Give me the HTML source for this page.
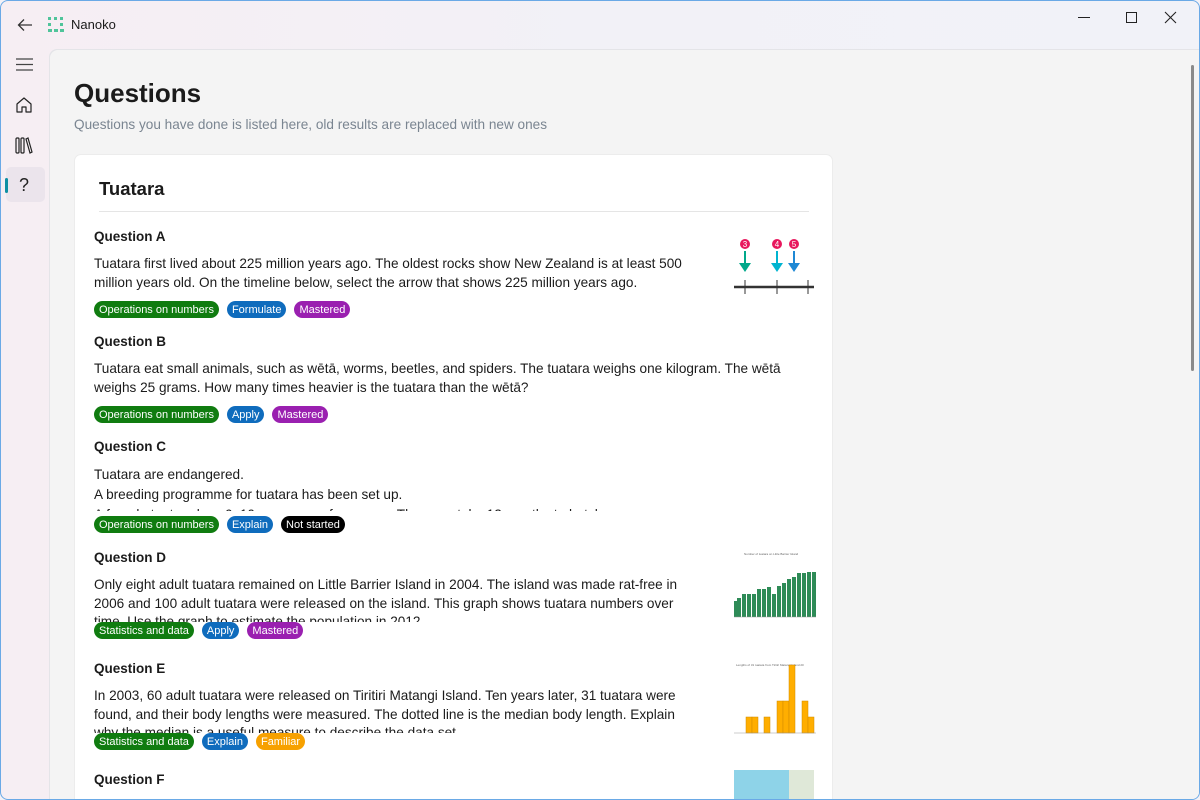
<!DOCTYPE html>
<html><head><meta charset="utf-8"><style>
*{margin:0;padding:0;box-sizing:border-box}
body{width:1200px;height:800px;overflow:hidden;font-family:"Liberation Sans",sans-serif;background:#f3f1f6;position:relative}
.win{position:absolute;inset:0;border:1px solid #6aa9e6;border-radius:8px;overflow:hidden;background:linear-gradient(90deg,#f6eef3,#f2f1f7 50%,#f1f2f8)}
.main{position:absolute;left:48px;top:48px;right:0;bottom:0;background:#f4f4f4;border-top-left-radius:8px;box-shadow:inset 1px 1px 0 #e4e4e8;overflow:hidden}
.abs{position:absolute}
.card{position:absolute;left:25px;top:105px;width:759px;height:700px;background:#fff;border-radius:7px;border:1px solid #ececec}
.q{position:absolute;left:19px}
.qt{font-weight:bold;font-size:13.5px;color:#1b1b1b}
.body{position:absolute;top:26px;font-size:13.6px;line-height:18.5px;color:#1b1b1b;height:44px;overflow:hidden}
.tags{position:absolute;display:flex;gap:8px;white-space:nowrap;width:600px}
.tag{display:block;height:17px;line-height:18px;border-radius:9px;padding:0 5px;font-size:11px;color:#fff;white-space:nowrap}
.g{background:#107c10}.b{background:#0f6cbd}.p{background:#9a20b0}.k{background:#000}.o{background:#f7a100}
</style></head><body><div class="win">
<svg class="abs" style="left:15px;top:15px" width="18" height="18" viewBox="0 0 18 18"><path d="M16 9H3M8 3.5 2.5 9 8 14.5" stroke="#333" stroke-width="1.3" fill="none"/></svg>
<svg class="abs" style="left:46px;top:15px" width="18" height="18"><g fill="#4fc49a"><rect x="1" y="1" width="3" height="3"/><rect x="7" y="1" width="3" height="3"/><rect x="13" y="1" width="3" height="3"/><rect x="1" y="7" width="3" height="3"/><rect x="13" y="7" width="3" height="3"/><rect x="1" y="13" width="4" height="3"/><rect x="7" y="13" width="4" height="3"/><rect x="13" y="13" width="4" height="3"/></g></svg>
<div class="abs" style="left:70px;top:16px;font-size:13px;color:#1b1b1b">Nanoko</div>
<div class="abs" style="left:1077px;top:16px;width:12px;height:1px;background:#222"></div>
<div class="abs" style="left:1125px;top:11px;width:11px;height:11px;border:1px solid #222"></div>
<svg class="abs" style="left:1163px;top:10px" width="13" height="13"><path d="M1 1 12 12M12 1 1 12" stroke="#222" stroke-width="1.1"/></svg>
<svg class="abs" style="left:15px;top:56px" width="17" height="15"><path d="M0 2h17M0 7.5h17M0 13h17" stroke="#444" stroke-width="1.3"/></svg>
<svg class="abs" style="left:14px;top:95px" width="18" height="18"><path d="M2 8 9 2l7 6v8h-5v-5H7v5H2z" stroke="#222" stroke-width="1.2" fill="none" stroke-linejoin="round"/></svg>
<svg class="abs" style="left:14px;top:136px" width="18" height="17"><g stroke="#222" stroke-width="1.2" fill="none"><rect x="1" y="1" width="3" height="15" rx="1"/><rect x="6" y="1" width="3" height="15" rx="1"/><path d="M11 2l2-1 4 14-2 1z"/></g></svg>
<div class="abs" style="left:5px;top:166px;width:39px;height:35px;background:#ebe4ec;border-radius:5px"></div>
<div class="abs" style="left:4px;top:177px;width:3px;height:15px;background:#0f8fa3;border-radius:2px"></div>
<div class="abs" style="left:18px;top:174px;font-size:18px;color:#222">?</div>
<div class="main">
<div class="abs" style="left:25px;top:29px;font-size:26px;font-weight:bold;color:#1b1b1b">Questions</div>
<div class="abs" style="left:25px;top:68px;font-size:13.6px;color:#7a8591">Questions you have done is listed here, old results are replaced with new ones</div>
<div class="abs" style="left:1142px;top:16px;width:3px;height:306px;background:#8a8a8a;border-radius:2px"></div>
<div class="card">
<div class="abs" style="left:24px;top:23px;font-size:18.5px;font-weight:bold;color:#1b1b1b">Tuatara</div>
<div class="abs" style="left:24px;top:56px;width:710px;height:1px;background:#e5e5e5"></div>

<div class="q" style="top:74px"><div class="qt">Question A</div>
<div class="body" style="width:605px">Tuatara first lived about 225 million years ago. The oldest rocks show New Zealand is at least 500 million years old. On the timeline below, select the arrow that shows 225 million years ago.</div>
<div class="tags" style="top:72px"><span class="tag g">Operations on numbers</span><span class="tag b">Formulate</span><span class="tag p">Mastered</span></div>
<svg class="abs" style="left:640px;top:9px" width="82" height="60"><g stroke="#333"><path d="M0 49h80" stroke-width="2.5"/><path d="M11 42v14M43 42v14M74 42v14" stroke-width="1"/></g><circle cx="11" cy="6" r="5" fill="#e8175d"/><circle cx="43" cy="6" r="5" fill="#e8175d"/><circle cx="60" cy="6" r="5" fill="#e8175d"/><g fill="#fff" font-size="8" text-anchor="middle" font-family="Liberation Sans"><text x="11" y="9">3</text><text x="43" y="9">4</text><text x="60" y="9">5</text></g><path d="M11 13v14" stroke="#00a88a" stroke-width="2"/><path d="M5 25h12l-6 9z" fill="#00a88a"/><path d="M43 13v14" stroke="#00b4d0" stroke-width="2"/><path d="M37 25h12l-6 9z" fill="#00b4d0"/><path d="M60 13v14" stroke="#1e88d4" stroke-width="2"/><path d="M54 25h12l-6 9z" fill="#1e88d4"/></svg>
</div>

<div class="q" style="top:179px"><div class="qt">Question B</div>
<div class="body" style="width:700px">Tuatara eat small animals, such as wētā, worms, beetles, and spiders. The tuatara weighs one kilogram. The wētā weighs 25 grams. How many times heavier is the tuatara than the wētā?</div>
<div class="tags" style="top:72px"><span class="tag g">Operations on numbers</span><span class="tag b">Apply</span><span class="tag p">Mastered</span></div></div>

<div class="q" style="top:284px"><div class="qt">Question C</div>
<div class="body" style="width:700px;line-height:20px;height:46px">Tuatara are endangered.<br>A breeding programme for tuatara has been set up.<br>A female tuatara lays 6–10 eggs every four years. The eggs take 12 months to hatch.</div>
<div class="tags" style="top:77px"><span class="tag g">Operations on numbers</span><span class="tag b">Explain</span><span class="tag k">Not started</span></div></div>

<div class="q" style="top:395px"><div class="qt">Question D</div>
<div class="body" style="width:605px;height:46px">Only eight adult tuatara remained on Little Barrier Island in 2004. The island was made rat-free in 2006 and 100 adult tuatara were released on the island. This graph shows tuatara numbers over time. Use the graph to estimate the population in 2012.</div>
<div class="tags" style="top:72px"><span class="tag g">Statistics and data</span><span class="tag b">Apply</span><span class="tag p">Mastered</span></div>
<svg class="abs" style="left:640px;top:-1px" width="82" height="80"><text x="10" y="6" font-size="3" fill="#666">Number of tuatara on Little Barrier Island</text><g fill="#2e8b57"><rect x="0" y="52" width="3" height="16"/><rect x="3" y="49" width="4" height="19"/><rect x="8" y="45" width="4" height="23"/><rect x="13" y="45" width="4" height="23"/><rect x="18" y="45" width="4" height="23"/><rect x="23" y="40" width="4" height="28"/><rect x="28" y="40" width="4" height="28"/><rect x="33" y="38" width="4" height="30"/><rect x="38" y="45" width="4" height="23"/><rect x="43" y="37" width="4" height="31"/><rect x="48" y="34" width="4" height="34"/><rect x="53" y="30" width="4" height="38"/><rect x="58" y="28" width="4" height="40"/><rect x="63" y="24" width="4" height="44"/><rect x="68" y="24" width="4" height="44"/><rect x="73" y="23" width="4" height="45"/><rect x="78" y="23" width="4" height="45"/></g><path d="M0 68h82" stroke="#999" stroke-width=".5"/></svg>
</div>

<div class="q" style="top:506px"><div class="qt">Question E</div>
<div class="body" style="width:605px;height:46px">In 2003, 60 adult tuatara were released on Tiritiri Matangi Island. Ten years later, 31 tuatara were found, and their body lengths were measured. The dotted line is the median body length. Explain why the median is a useful measure to describe the data set.</div>
<div class="tags" style="top:72px"><span class="tag g">Statistics and data</span><span class="tag b">Explain</span><span class="tag o">Familiar</span></div>
<svg class="abs" style="left:640px;top:-2px" width="82" height="80"><text x="2" y="7" font-size="3" fill="#666">Lengths of 31 tuatara from Tiritiri Matangi Island 20</text><g fill="#ffae00" stroke="#d08a00" stroke-width=".5"><rect x="12" y="58" width="6" height="16"/><rect x="18" y="58" width="6" height="16"/><rect x="30" y="58" width="6" height="16"/><rect x="43" y="42" width="6" height="32"/><rect x="49" y="42" width="6" height="32"/><rect x="55" y="6" width="6" height="68"/><rect x="68" y="42" width="6" height="32"/><rect x="74" y="58" width="6" height="16"/></g><path d="M0 74h82" stroke="#999" stroke-width=".5"/></svg>
</div>

<div class="q" style="top:617px"><div class="qt">Question F</div>
<div class="abs" style="left:640px;top:-2px;width:80px;height:40px;background:#8ed3e8"><div style="position:absolute;left:55px;top:0;width:25px;height:40px;background:#dfe8d8"></div></div></div>
</div>
</div>
</div></body></html>
